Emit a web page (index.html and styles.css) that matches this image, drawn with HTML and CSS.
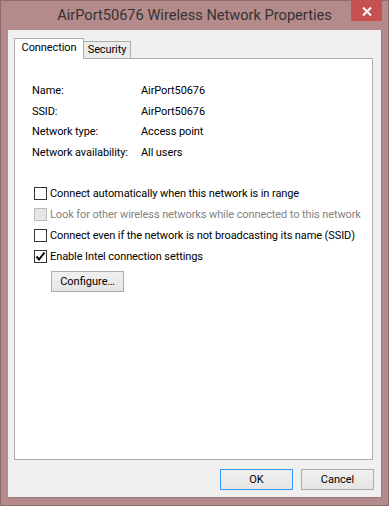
FILE: index.html
```html
<!DOCTYPE html>
<html lang="en">
<head>
    <meta charset="UTF-8">
    <meta name="viewport" content="width=device-width, initial-scale=1.0">
    <title>AirPort50676 Wireless Network Properties</title>
    <link rel="stylesheet" href="styles.css">
</head>
<body>
    <div class="window">
        <div class="titlebar">
            <div class="title">AirPort50676 Wireless Network Properties</div>
            <button class="close" aria-label="Close">
                <svg width="10" height="9" viewBox="0 0 10 9"><path d="M1 0.5 L9 8.5 M9 0.5 L1 8.5" stroke="#fff" stroke-width="2"/></svg>
            </button>
        </div>

        <div class="client">
            <div class="tabs">
                <div class="tab active">Connection</div>
                <div class="tab">Security</div>
            </div>

            <div class="panel">
                <div class="info">
                    <div>Name:</div><div>AirPort50676</div>
                    <div>SSID:</div><div>AirPort50676</div>
                    <div>Network type:</div><div>Access point</div>
                    <div>Network availability:</div><div>All users</div>
                </div>

                <div class="checks">
                    <div class="check"><span class="box"></span>Connect automatically when this network is in range</div>
                    <div class="check disabled"><span class="box"></span>Look for other wireless networks while connected to this network</div>
                    <div class="check"><span class="box"></span>Connect even if the network is not broadcasting its name (SSID)</div>
                    <div class="check"><span class="box"><svg width="11" height="11" viewBox="0 0 11 11"><path d="M1.5 5.5 L4 8.5 L9.5 1.5" fill="none" stroke="#000" stroke-width="2"/></svg></span>Enable Intel connection settings</div>
                </div>

                <button class="btn configure">Configure…</button>
            </div>

            <div class="footer">
                <button class="btn default">OK</button>
                <button class="btn">Cancel</button>
            </div>
        </div>
    </div>
</body>
</html>
```
FILE: styles.css
```css
body {
    margin: 0;
    background: #b58a8a;
    font-family: Roboto, "Liberation Sans", sans-serif;
    font-size: 11px;
    letter-spacing: -0.1px;
    color: #000;
}
.window {
    box-sizing: border-box;
    width: 389px;
    height: 506px;
    background: #b58a8a;
    border: 1px solid #8f6c6c;
    display: flex;
    flex-direction: column;
}
.titlebar {
    height: 29px;
    display: grid;
    grid-template-columns: 1fr auto 1fr;
    flex: none;
}
.title {
    grid-column: 2;
    font-size: 14.6px;
    letter-spacing: 0;
    line-height: 29px;
    color: #333;
    white-space: nowrap;
}
.close {
    grid-column: 3;
    justify-self: end;
    width: 31px;
    height: 21px;
    margin: -1px 6px 0 0;
    padding: 1px 0 0;
    border: none;
    background: #c75050;
    display: flex;
    align-items: center;
    justify-content: center;
}
.client {
    flex: 1;
    margin: 0 7px 8px 7px;
    padding: 8px 8px 7px 6px;
    background: #f0f0f0;
    box-shadow: 1px 1px 0 #9c7777;
    display: flex;
    flex-direction: column;
}
.tabs {
    display: flex;
    align-items: flex-end;
    height: 20px;
    flex: none;
}
.tab {
    box-sizing: border-box;
    width: 47px;
    height: 17px;
    line-height: 16px;
    border: 1px solid #adadad;
    border-left: none;
    border-bottom: none;
    background: #ececec;
    text-align: center;
}
.tab.active {
    position: relative;
    width: 70px;
    height: 21px;
    line-height: 18px;
    margin-bottom: -1px;
    border-left: 1px solid #adadad;
    background: #fff;
}
.panel {
    flex: 1;
    background: #fff;
    border: 1px solid #adadad;
    padding: 22px 17px 0;
}
.info {
    display: grid;
    grid-template-columns: 109px auto;
    line-height: 20.5px;
}
.checks {
    margin-top: 20px;
    padding-left: 2px;
}
.check {
    display: flex;
    align-items: center;
    height: 21px;
    white-space: nowrap;
}
.box {
    box-sizing: border-box;
    width: 13px;
    height: 13px;
    border: 1px solid #333;
    background: #fff;
    margin-right: 3px;
    display: flex;
    align-items: center;
    justify-content: center;
    flex: none;
}
.check.disabled { color: #838383; }
.check.disabled .box {
    border-color: #bcbcbc;
    background: #e6e6e6;
}
.btn {
    box-sizing: border-box;
    width: 73px;
    height: 21px;
    padding: 0;
    border: 1px solid #acacac;
    background: linear-gradient(#f0f0f0, #e5e5e5);
    font: inherit;
    line-height: 19px;
    color: #000;
}
.configure {
    display: block;
    margin: 4px 0 0 19px;
}
.footer {
    display: flex;
    justify-content: flex-end;
    gap: 8px;
    margin: 9px -1px 0 0;
    flex: none;
}
.btn.default { border-color: #3399ff; }
```
